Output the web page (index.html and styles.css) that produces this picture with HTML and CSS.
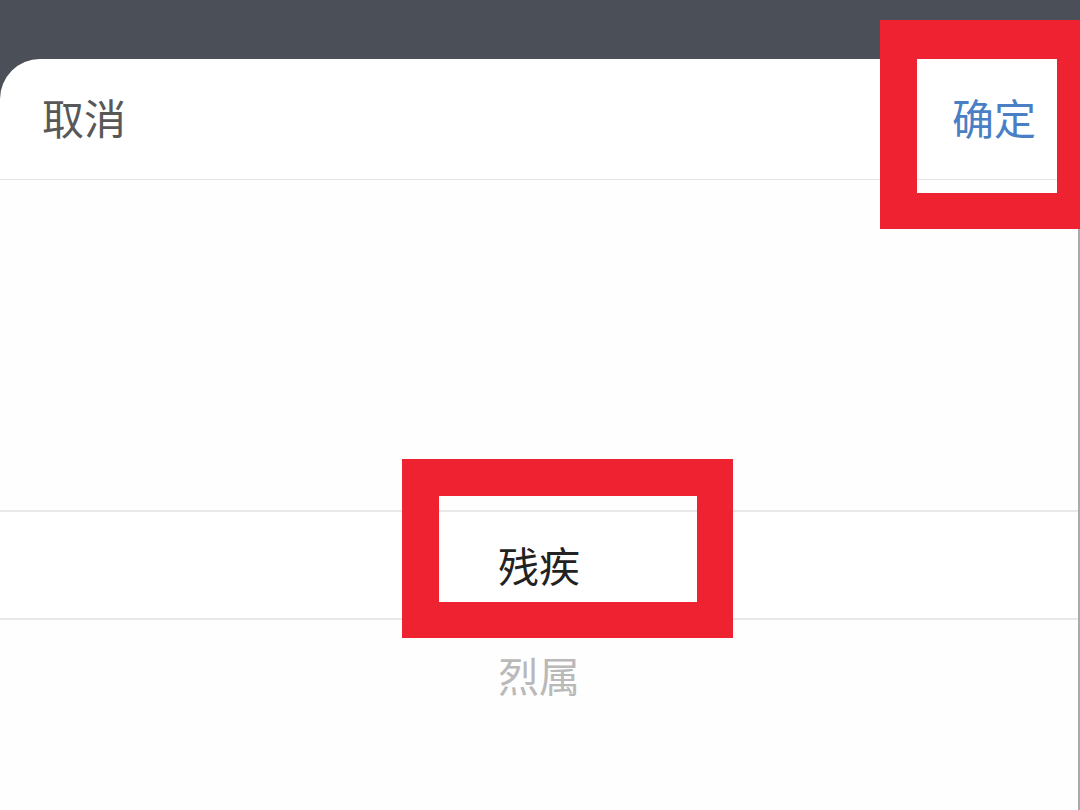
FILE: index.html
```html
<!DOCTYPE html>
<html lang="zh-CN">
<head>
    <meta charset="UTF-8">
    <meta name="viewport" content="width=device-width, initial-scale=1.0">
    <title>选择</title>
    <link rel="stylesheet" href="styles.css">
</head>
<body>
    <div class="mask"></div>

    <div class="sheet">
        <div class="sheet-header">
            <span class="btn-cancel">取消</span>
            <span class="btn-confirm">确定</span>
        </div>

        <div class="picker">
            <div class="picker-item"></div>
            <div class="picker-item"></div>
            <div class="picker-item"></div>
            <div class="picker-item selected">残疾</div>
            <div class="picker-item">烈属</div>
            <div class="picker-item"></div>
        </div>
    </div>

    <!-- annotation boxes -->
    <div class="mark mark-confirm"></div>
    <div class="mark mark-option"></div>
</body>
</html>
```

FILE: styles.css
```css
* {
    margin: 0;
    padding: 0;
    box-sizing: border-box;
}

html, body {
    height: 100%;
    overflow: hidden;
}

body {
    font-family: "Noto Sans CJK SC", "Noto Sans", sans-serif;
    background: #4a4f58;
    display: flex;
    flex-direction: column;
    position: relative;
}

.mask {
    height: 59px;
    flex-shrink: 0;
}

.sheet {
    flex: 1;
    background: #ffffff;
    border-top-left-radius: 40px;
    border-right: 2px solid #a9abaf;
    overflow: hidden;
}

.sheet-header {
    height: 121px;
    display: flex;
    align-items: center;
    justify-content: space-between;
    padding: 0 42px 5px 42px;
    border-bottom: 1px solid #e4e4e4;
    font-size: 42px;
    line-height: 1;
}

.btn-cancel {
    color: #585858;
}

.btn-confirm {
    color: #4a7fc6;
}

.picker {
    display: flex;
    flex-direction: column;
    background: #fefefe;
}

.picker-item {
    height: 110px;
    display: flex;
    align-items: center;
    justify-content: center;
    padding-bottom: 3px;
    font-size: 41px;
    color: #b9b9b9;
    flex-shrink: 0;
}

.picker-item.selected {
    height: 110px;
    color: #222222;
    background: #ffffff;
    border-top: 2px solid #e8e8e8;
    border-bottom: 2px solid #e8e8e8;
}

.mark {
    position: absolute;
    border: 37px solid #ee2230;
}

.mark-confirm {
    left: 880px;
    top: 20px;
    width: 210px;
    height: 209px;
    border-top-width: 39px;
    border-bottom-width: 36px;
    border-right-width: 33px;
}

.mark-option {
    left: 402px;
    top: 459px;
    width: 331px;
    height: 179px;
    border-right-width: 36px;
    border-bottom-width: 36px;
}
```
